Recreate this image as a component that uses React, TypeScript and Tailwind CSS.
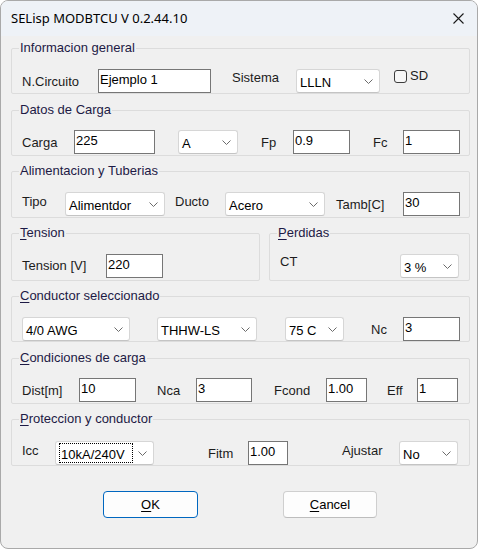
import type { ReactNode } from "react";

// Small drop-down box with the thin chevron on the right
function Combo({
  value,
  className,
  focused,
}: {
  value: string;
  className: string;
  focused?: boolean;
}) {
  return (
    <div
      className={`flex h-[24px] shrink-0 items-center justify-between rounded-[3px] border border-[#d6d6d6] border-b-[#c4c4c4] bg-white pl-[3px] pr-[6px] ${className}`}
    >
      {focused ? (
        <span className="flex h-[20px] w-[74px] items-center border border-dotted border-black pl-[1px] pt-[2px] leading-[15px]">
          {value}
        </span>
      ) : (
        <span className="pt-[3px] leading-[15px]">{value}</span>
      )}
      <svg width="9" height="5" viewBox="0 0 9 5" className="mt-[1px]">
        <path d="M0.5 0.5 L4.5 4.5 L8.5 0.5" fill="none" stroke="#6b6b6b" strokeWidth="1" />
      </svg>
    </div>
  );
}

function Field({ value, className }: { value: string; className: string }) {
  return (
    <div
      className={`h-[24px] shrink-0 border border-[#767676] bg-white pl-[1px] pt-[2px] leading-[16px] text-black ${className}`}
    >
      {value}
    </div>
  );
}

function Label({ children, className }: { children: ReactNode; className: string }) {
  return <span className={`shrink-0 leading-[16px] text-[#1c1c1c] ${className}`}>{children}</span>;
}

function Group({
  title,
  className,
  rowClass,
  children,
}: {
  title: ReactNode;
  className: string;
  rowClass: string;
  children: ReactNode;
}) {
  return (
    <fieldset className={`shrink-0 rounded-[2px] border border-[#dcdcdc] ${className}`}>
      <legend className="ml-[7px] px-[1px] leading-[16px] text-[#1d1a45]">{title}</legend>
      <div className={`flex items-center pl-[10px] ${rowClass}`}>{children}</div>
    </fieldset>
  );
}

function Key({ children }: { children: string }) {
  return <span className="underline decoration-1 underline-offset-[2px]">{children}</span>;
}

export default function App() {
  return (
    <div className="h-[549px] w-[478px] bg-white font-['Liberation_Sans',Arial,sans-serif] text-[13px]">
      <div className="flex h-[549px] w-[478px] flex-col overflow-hidden rounded-[8px] border border-[#a9a9a9] bg-[#f0f0f0]">
        {/* title bar */}
        <div className="flex h-[35px] shrink-0 items-center justify-between bg-[#eef2f7] pl-[10px] pr-[13px]">
          <span className="pt-[1px] font-['Segoe_UI','Noto_Sans',sans-serif] text-[13px] text-black">
            SELisp MODBTCU V 0.2.44.10
          </span>
          <svg width="11" height="11" viewBox="0 0 11 11">
            <path d="M0.5 0.5 L10.5 10.5 M10.5 0.5 L0.5 10.5" stroke="#1a1a1a" strokeWidth="1.1" />
          </svg>
        </div>

        <div className="flex flex-col pl-[10px] pt-[4px]">
          <Group title="Informacion general" className="h-[54px] w-[459px]" rowClass="mt-[12px]">
            <Label className="mt-[2px] w-[76px]">N.Circuito</Label>
            <Field value="Ejemplo 1" className="w-[113px]" />
            <Label className="mb-[6px] ml-[21px] w-[64px]">Sistema</Label>
            <Combo value="LLLN" className="w-[84px]" />
            <div className="mb-[9px] ml-[14px] flex items-center">
              <span className="h-[13px] w-[13px] rounded-[3px] border border-[#3c3c3c] bg-[#f7f7f7]" />
              <span className="ml-[3px] leading-[16px] text-[#1c1c1c]">SD</span>
            </div>
          </Group>

          <Group title="Datos de Carga" className="mt-[8px] h-[54px] w-[459px]" rowClass="mt-[12px]">
            <Label className="mt-[2px] w-[52px]">Carga</Label>
            <Field value="225" className="w-[81px]" />
            <Combo value="A" className="ml-[23px] w-[60px]" />
            <Label className="mt-[2px] ml-[23px] w-[32px]">Fp</Label>
            <Field value="0.9" className="w-[57px]" />
            <Label className="mt-[2px] ml-[23px] w-[30px]">Fc</Label>
            <Field value="1" className="w-[57px]" />
          </Group>

          <Group
            title="Alimentacion y Tuberias"
            className="mt-[7px] h-[55px] w-[459px]"
            rowClass="mt-[13px]"
          >
            <Label className="mb-[5px] w-[43px]">Tipo</Label>
            <Combo value="Alimentdor" className="w-[100px]" />
            <Label className="mb-[5px] ml-[10px] w-[50px]">Ducto</Label>
            <Combo value="Acero" className="w-[100px]" />
            <Label className="mt-[1px] ml-[11px] w-[67px]">Tamb[C]</Label>
            <Field value="30" className="w-[57px]" />
          </Group>

          <div className="mt-[7px] flex">
            <Group
              title={
                <>
                  <Key>T</Key>ension
                </>
              }
              className="h-[56px] w-[249px]"
              rowClass="mt-[13px]"
            >
              <Label className="w-[84px]">Tension [V]</Label>
              <Field value="220" className="w-[57px]" />
            </Group>
            <Group
              title={
                <>
                  <Key>P</Key>erdidas
                </>
              }
              className="ml-[9px] h-[56px] w-[201px]"
              rowClass="mt-[13px]"
            >
              <Label className="mb-[8px] w-[120px]">CT</Label>
              <Combo value="3 %" className="w-[59px]" />
            </Group>
          </div>

          <Group
            title={
              <>
                <Key>C</Key>onductor seleccionado
              </>
            }
            className="mt-[7px] h-[54px] w-[459px]"
            rowClass="mt-[13px]"
          >
            <Combo value="4/0 AWG" className="w-[108px]" />
            <Combo value="THHW-LS" className="ml-[27px] w-[100px]" />
            <Combo value="75 C" className="ml-[28px] w-[59px]" />
            <Label className="mt-[2px] ml-[27px] w-[32px]">Nc</Label>
            <Field value="3" className="w-[57px]" />
          </Group>

          <Group
            title={
              <>
                <Key>C</Key>ondiciones de carga
              </>
            }
            className="mt-[8px] h-[54px] w-[459px]"
            rowClass="mt-[12px]"
          >
            <Label className="mt-[2px] w-[57px]">Dist[m]</Label>
            <Field value="10" className="w-[57px]" />
            <Label className="mt-[2px] ml-[21px] w-[39px]">Nca</Label>
            <Field value="3" className="w-[56px]" />
            <Label className="mt-[2px] ml-[22px] w-[52px]">Fcond</Label>
            <Field value="1.00" className="w-[41px]" />
            <Label className="mt-[2px] ml-[20px] w-[30px]">Eff</Label>
            <Field value="1" className="w-[41px]" />
          </Group>

          <Group
            title={
              <>
                <Key>P</Key>roteccion y conductor
              </>
            }
            className="mt-[7px] h-[55px] w-[459px]"
            rowClass="mt-[14px]"
          >
            <Label className="mb-[5px] w-[33px]">Icc</Label>
            <Combo value="10kA/240V" className="w-[99px]" focused />
            <Label className="mt-[2px] ml-[54px] w-[40px]">Fitm</Label>
            <Field value="1.00" className="w-[40px]" />
            <Label className="mb-[5px] ml-[54px] w-[57px]">Ajustar</Label>
            <Combo value="No" className="w-[59px]" />
          </Group>

          {/* dialog buttons */}
          <div className="mt-[25px] flex pl-[92px]">
            <button className="h-[27px] w-[95px] rounded-[4px] border border-[#0067c0] bg-[#fdfdfd] pt-[1px] text-black">
              <Key>O</Key>K
            </button>
            <button className="ml-[85px] h-[27px] w-[94px] rounded-[4px] border border-[#cfcfcf] border-b-[#bdbdbd] bg-[#fdfdfd] pt-[1px] text-black">
              <Key>C</Key>ancel
            </button>
          </div>
        </div>
      </div>
    </div>
  );
}
